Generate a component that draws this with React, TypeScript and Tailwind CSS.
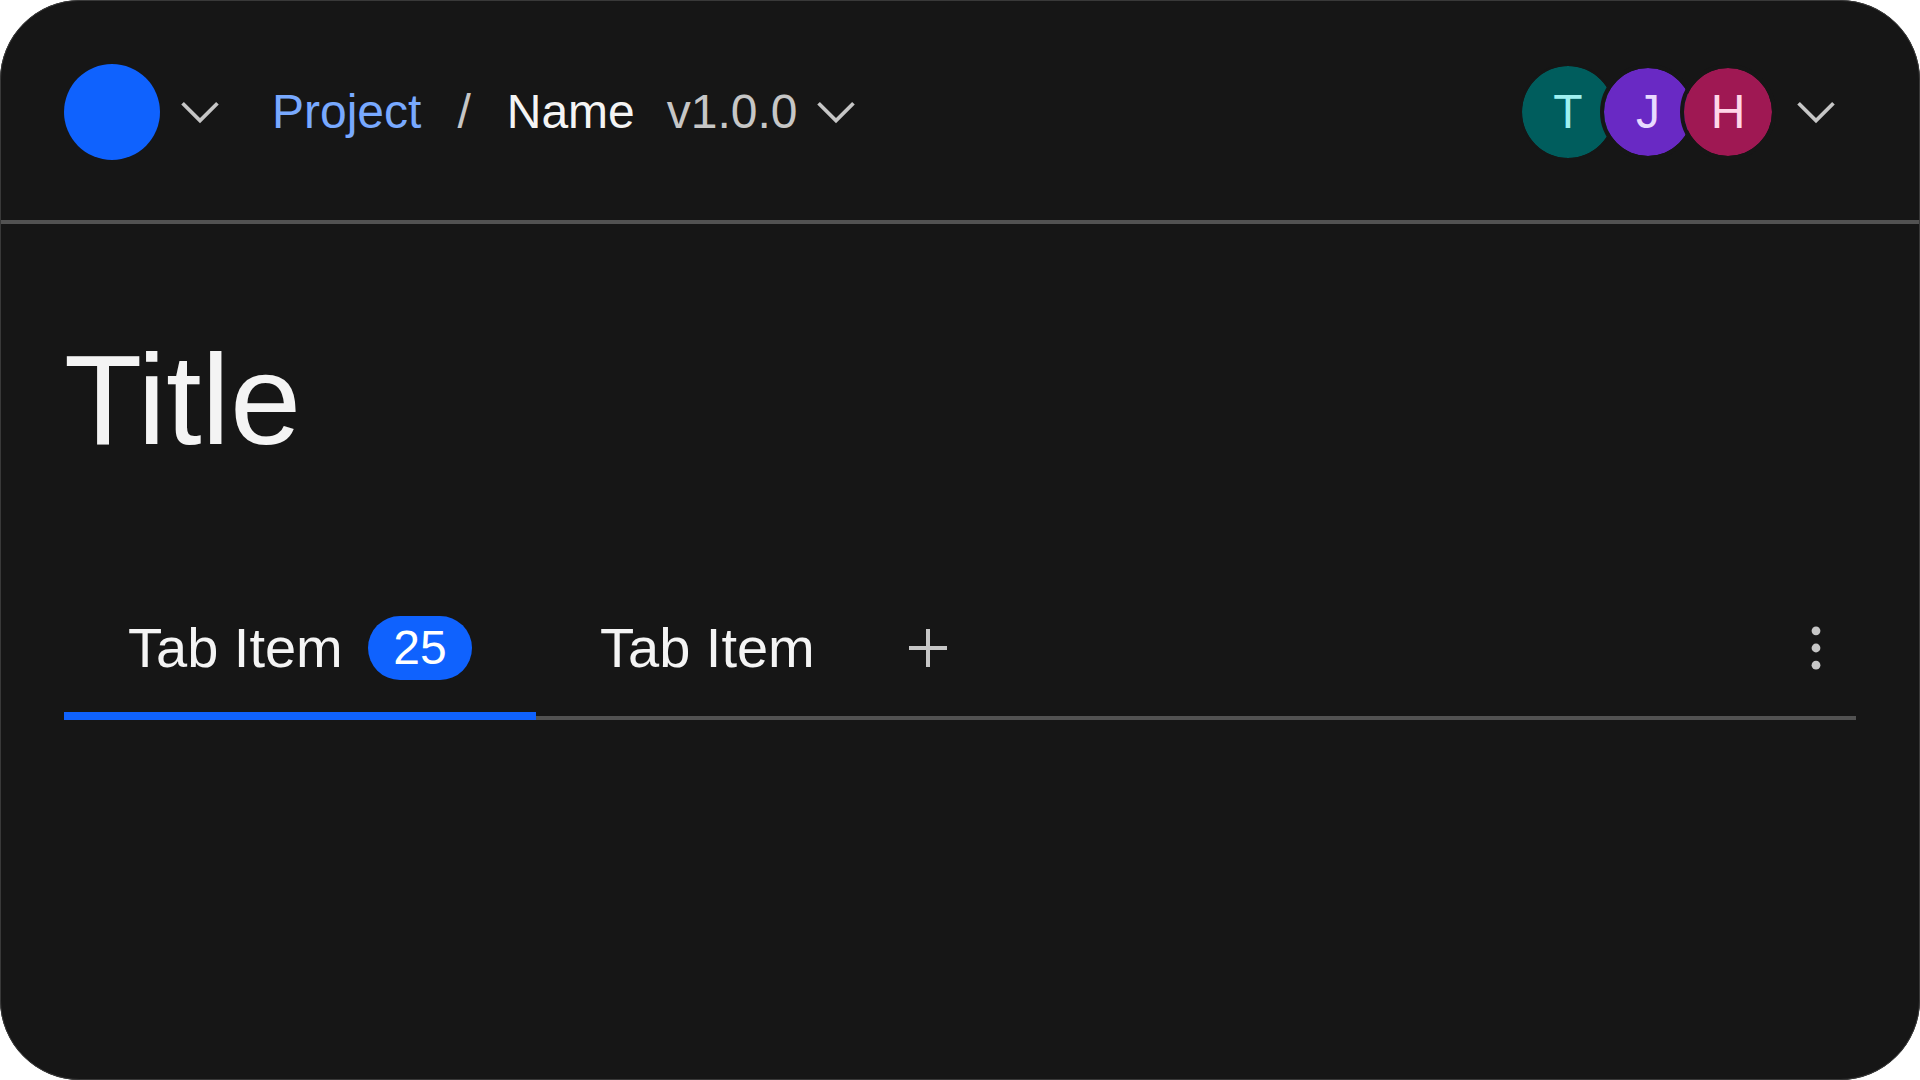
import React, { useState } from 'react';
import clsx from 'clsx';

interface Member {
  initial: string;
  name: string;
  className: string;
}

interface Tab {
  id: string;
  label: string;
  count?: number;
}

const members: Member[] = [
  { initial: 'T', name: 'Member T', className: 'border-2 bg-[#005d5d] text-[#9ef0f0]' },
  { initial: 'J', name: 'Member J', className: 'border-4 bg-[#6929c4] text-[#e8daff]' },
  { initial: 'H', name: 'Member H', className: 'border-4 bg-[#9f1853] text-[#ffd6e8]' },
];

const tabs: Tab[] = [
  { id: 'first', label: 'Tab Item', count: 25 },
  { id: 'second', label: 'Tab Item' },
];

function ChevronDown() {
  return (
    <svg viewBox="0 0 16 16" className="size-15 shrink-0 fill-[#c6c6c6]" aria-hidden="true">
      <path d="M8 11 3 6l.7-.7L8 9.6l4.3-4.3.7.7z" />
    </svg>
  );
}

function Plus() {
  return (
    <svg viewBox="0 0 60 60" className="size-15 shrink-0 fill-[#c6c6c6]" aria-hidden="true">
      <path d="M32 28V11h-4v17H11v4h17v17h4V32h17v-4z" />
    </svg>
  );
}

function Overflow() {
  return (
    <svg viewBox="0 0 60 60" className="size-15 shrink-0 fill-[#c6c6c6]" aria-hidden="true">
      <circle cx="30" cy="12.8" r="4.4" />
      <circle cx="30" cy="30" r="4.4" />
      <circle cx="30" cy="47.2" r="4.4" />
    </svg>
  );
}

function IconButton({ label, children }: { label: string; children: React.ReactNode }) {
  return (
    <button type="button" aria-label={label} className="flex h-24 w-20 shrink-0 items-center justify-center">
      {children}
    </button>
  );
}

function Header() {
  return (
    <header className="flex items-center justify-between border-b-4 border-[#525252] px-16 pt-16 pb-15 text-5xl leading-none">
      <div className="flex items-center">
        <div className="size-24 shrink-0 rounded-full bg-[#0f62fe]" />
        <IconButton label="Switch workspace">
          <ChevronDown />
        </IconButton>
        <div className="ml-8 flex items-center gap-8">
          <nav aria-label="Breadcrumb" className="flex items-center gap-9">
            <a href="#" className="text-[#78a9ff]">Project</a>
            <span className="text-[#c6c6c6]">/</span>
            <span className="text-[#f4f4f4]">Name</span>
          </nav>
          <button type="button" className="flex items-center gap-2 text-[#c6c6c6]">
            v1.0.0
            <ChevronDown />
          </button>
        </div>
      </div>
      <div className="flex items-center">
        <ul className="flex -space-x-4">
          {members.map((member) => (
            <li
              key={member.initial}
              title={member.name}
              className={clsx(
                'flex size-24 items-center justify-center rounded-full border-[#161616] bg-clip-padding',
                member.className
              )}
            >
              {member.initial}
            </li>
          ))}
        </ul>
        <IconButton label="Show members">
          <ChevronDown />
        </IconButton>
      </div>
    </header>
  );
}

export default function App() {
  const [activeTab, setActiveTab] = useState('first');

  return (
    <div className="min-h-screen bg-white font-['Liberation_Sans',Arial,sans-serif]">
      <div className="min-h-screen overflow-hidden rounded-[80px] bg-[#161616] outline -outline-offset-1 outline-[#393939]">
        <Header />
        <main className="px-16">
          <h1 className="py-28 text-9xl text-[#f4f4f4]">Title</h1>
          <div className="relative flex h-36 items-center">
            <div className="absolute inset-x-0 bottom-0 h-1 bg-[#525252]" />
            <div role="tablist" className="relative flex h-full">
              {tabs.map((tab) => (
                <button
                  key={tab.id}
                  type="button"
                  role="tab"
                  aria-selected={tab.id === activeTab}
                  onClick={() => setActiveTab(tab.id)}
                  className="relative flex h-full items-center gap-4 px-16 text-[56px] leading-none text-[#f4f4f4]"
                >
                  <span className="min-w-56 text-left">{tab.label}</span>
                  {tab.count !== undefined && (
                    <span className="flex h-16 w-26 items-center justify-center rounded-full bg-[#0f62fe] text-5xl leading-none text-white">
                      {tab.count}
                    </span>
                  )}
                  {tab.id === activeTab && <span className="absolute inset-x-0 bottom-0 h-2 bg-[#0f62fe]" />}
                </button>
              ))}
            </div>
            <IconButton label="Add tab">
              <Plus />
            </IconButton>
            <div className="ml-auto">
              <IconButton label="More options">
                <Overflow />
              </IconButton>
            </div>
          </div>
        </main>
      </div>
    </div>
  );
}
